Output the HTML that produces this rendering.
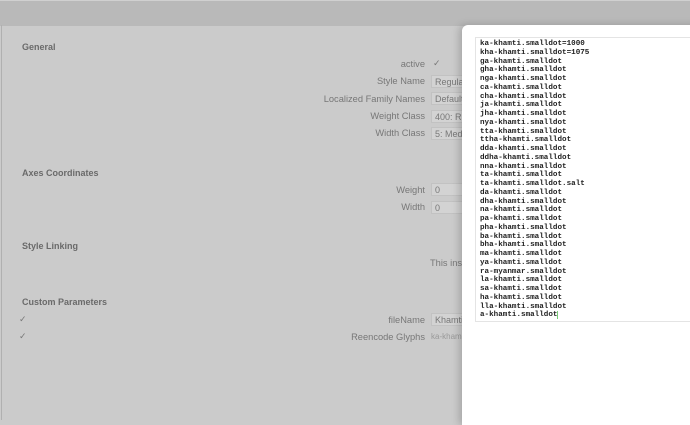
<!DOCTYPE html>
<html><head><style>
body{margin:0;width:690px;height:420px;overflow:hidden;background:#cbcbcb;font-family:"Liberation Sans",sans-serif;position:relative}
.top{position:absolute;left:0;top:0;width:690px;height:25px;background:#b9b9b9;border-top:1px solid #d0d0d0}
.lb{position:absolute;left:1px;top:25px;width:1px;height:395px;background:#b0b0b0}
.t{position:absolute;font-size:9px;color:#6e6e6e;white-space:nowrap}
.h{position:absolute;font-size:9px;font-weight:bold;color:#6a6a6a}
.r{position:absolute;right:265px;font-size:9.3px;color:#777;text-align:right;white-space:nowrap}
.f{position:absolute;left:431px;width:40px;height:13px;background:#d3d3d3;border:1px solid #c2c2c2;font-size:9px;color:#777;line-height:13px;padding-left:3px;box-sizing:border-box}
.cb{position:absolute;font-size:9px;color:#777}
.sheet{position:absolute;left:462px;top:25px;width:240px;height:400px;background:#fff;border-radius:6px 0 0 0;box-shadow:-3px 0 8px rgba(0,0,0,.18)}
.ta{position:absolute;left:475px;top:37px;width:230px;height:285px;border:1px solid #e4e4e4;border-right:none;box-sizing:border-box}
pre{position:absolute;left:480px;top:40px;margin:0;font-family:"Liberation Mono",monospace;font-size:7.6px;line-height:8.75px;color:#222;font-weight:bold}
</style></head><body>
<div class="top"></div><div class="lb"></div>
<div class="h" style="left:22px;top:42px">General</div>
<div class="r" style="top:59px">active</div><div class="cb" style="left:433px;top:58px">✓</div>
<div class="r" style="top:76px">Style Name</div><div class="f" style="top:75px">Regular</div>
<div class="r" style="top:94px">Localized Family Names</div><div class="f" style="top:92px">Default</div>
<div class="r" style="top:111px">Weight Class</div><div class="f" style="top:110px">400: R</div>
<div class="r" style="top:128px">Width Class</div><div class="f" style="top:127px">5: Med</div>
<div class="h" style="left:22px;top:168px">Axes Coordinates</div>
<div class="r" style="top:185px">Weight</div><div class="f" style="top:183px">0</div>
<div class="r" style="top:202px">Width</div><div class="f" style="top:201px">0</div>
<div class="h" style="left:22px;top:241px">Style Linking</div>
<div class="t" style="left:430px;top:258px;font-size:9.3px;color:#777">This ins</div>
<div class="h" style="left:22px;top:297px">Custom Parameters</div>
<div class="cb" style="left:19px;top:314px">✓</div><div class="cb" style="left:19px;top:331px">✓</div>
<div class="r" style="top:315px">fileName</div><div class="f" style="top:313px">Khamti</div>
<div class="r" style="top:332px">Reencode Glyphs</div><div class="t" style="left:431px;top:332px;font-size:8px;color:#999">ka-kham</div>
<div class="sheet"></div>
<div class="ta"></div>
<pre>ka-khamti.smalldot=1000
kha-khamti.smalldot=1075
ga-khamti.smalldot
gha-khamti.smalldot
nga-khamti.smalldot
ca-khamti.smalldot
cha-khamti.smalldot
ja-khamti.smalldot
jha-khamti.smalldot
nya-khamti.smalldot
tta-khamti.smalldot
ttha-khamti.smalldot
dda-khamti.smalldot
ddha-khamti.smalldot
nna-khamti.smalldot
ta-khamti.smalldot
ta-khamti.smalldot.salt
da-khamti.smalldot
dha-khamti.smalldot
na-khamti.smalldot
pa-khamti.smalldot
pha-khamti.smalldot
ba-khamti.smalldot
bha-khamti.smalldot
ma-khamti.smalldot
ya-khamti.smalldot
ra-myanmar.smalldot
la-khamti.smalldot
sa-khamti.smalldot
ha-khamti.smalldot
lla-khamti.smalldot
a-khamti.smalldot<span style="border-left:1px solid #7c7"></span></pre>
</body></html>
